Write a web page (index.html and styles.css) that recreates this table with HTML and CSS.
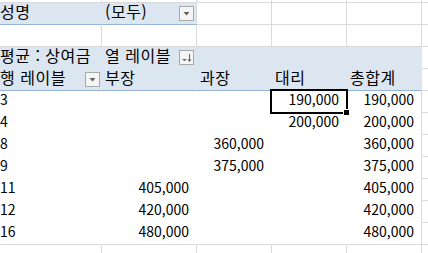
FILE: index.html
```html
<!DOCTYPE html>
<html lang="ko">
<head>
<meta charset="utf-8">
<title>피벗 테이블</title>
<link rel="stylesheet" href="styles.css">
</head>
<body>
<div class="sheet">
  <div class="c top first"></div><div class="c top"></div><div class="c top"></div><div class="c top"></div><div class="c top"></div><div class="c top"></div>

  <div class="c f1 first fA k">성명</div>
  <div class="c f1 btncell k">(모두)<span class="btn"><svg width="13" height="13" viewBox="0 0 13 13"><polygon points="3.5,5 9.5,5 6.5,8.5" fill="#5f5f5f"/></svg></span></div>
  <div class="c"></div><div class="c"></div><div class="c"></div><div class="c"></div>

  <div class="c first"></div><div class="c"></div><div class="c"></div><div class="c"></div><div class="c"></div><div class="c"></div>

  <div class="c h3 first k">평균 : 상여금</div>
  <div class="c h3 btncell k">열 레이블<span class="btn"><svg width="13" height="13" viewBox="0 0 13 13"><polygon points="2,8 7,8 4.5,10" fill="#5f5f5f"/><rect x="9" y="3" width="1" height="6" fill="#5f5f5f"/><polygon points="7.5,8.5 11.5,8.5 9.5,11" fill="#5f5f5f"/></svg></span></div>
  <div class="c h3"></div><div class="c h3"></div><div class="c h3"></div><div class="c"></div>

  <div class="c h4 first btncellA k">행 레이블<span class="btn"><svg width="13" height="13" viewBox="0 0 13 13"><polygon points="3.5,5 9.5,5 6.5,8.5" fill="#5f5f5f"/></svg></span></div>
  <div class="c h4 k">부장</div>
  <div class="c h4 k">과장</div>
  <div class="c h4 k">대리</div>
  <div class="c h4 k">총합계</div>
  <div class="c"></div>

  <div class="c pv first">3</div><div class="c pv num"></div><div class="c pv num"></div><div class="c pv num">190,000</div><div class="c pv num lastcol">190,000</div><div class="c"></div>
  <div class="c pv first">4</div><div class="c pv num"></div><div class="c pv num"></div><div class="c pv num">200,000</div><div class="c pv num lastcol">200,000</div><div class="c"></div>
  <div class="c pv first">8</div><div class="c pv num"></div><div class="c pv num">360,000</div><div class="c pv num"></div><div class="c pv num lastcol">360,000</div><div class="c"></div>
  <div class="c pv first">9</div><div class="c pv num"></div><div class="c pv num">375,000</div><div class="c pv num"></div><div class="c pv num lastcol">375,000</div><div class="c"></div>
  <div class="c pv first">11</div><div class="c pv num">405,000</div><div class="c pv num"></div><div class="c pv num"></div><div class="c pv num lastcol">405,000</div><div class="c"></div>
  <div class="c pv first">12</div><div class="c pv num">420,000</div><div class="c pv num"></div><div class="c pv num"></div><div class="c pv num lastcol">420,000</div><div class="c"></div>
  <div class="c pv first lastrow">16</div><div class="c pv num lastrow">480,000</div><div class="c pv num lastrow"></div><div class="c pv num lastrow"></div><div class="c pv num lastcol lastrow">480,000</div><div class="c"></div>

  <div class="c first end"></div><div class="c end"></div><div class="c end"></div><div class="c end"></div><div class="c end"></div><div class="c end"></div>

  <div class="sel"></div>
  <div class="handle"></div>
</div>
</body>
</html>
```

FILE: styles.css
```css
* { box-sizing: border-box; }
html, body { margin: 0; padding: 0; background: #fff; }
body {
  width: 428px;
  height: 253px;
  overflow: hidden;
  font-family: "Noto Sans CJK KR", "Noto Sans", sans-serif;
  font-size: 14px;
  color: #000;
}
.sheet {
  position: relative;
  display: grid;
  grid-template-columns: 102px 95px 75px 75px 75px 1fr;
  grid-template-rows: 3px repeat(11, 22px) 8px;
}
.c {
  border-right: 1px solid #dadada;
  border-bottom: 1px solid #dadada;
  display: flex;
  align-items: flex-start;
  line-height: 17px;
  padding: 0 3px;
  white-space: nowrap;
  min-width: 0;
}
.c.end { border-bottom: 0; }
.c.first { padding-left: 0; }
.k { font-size: 16px; letter-spacing: 0.5px; }
.f1 { background: #dce6f1; border-bottom-color: #95b3d7; }
.f1.fA { border-right-color: #dce6f1; }
.h3 { background: #dce6f1; border-right-color: #dce6f1; border-bottom-color: #dce6f1; }
.h4 { background: #dce6f1; border-right-color: #dce6f1; border-bottom-color: #95b3d7; }
.pv { border-right-color: #fff; border-bottom-color: #fff; }
.pv.lastcol { border-right-color: #dadada; }
.pv.lastrow { border-bottom-color: #dadada; }
.num { justify-content: flex-end; padding-right: 7px; }
.btncell { padding-right: 2px; }
.btncellA { padding-right: 1px; }
.btn {
  margin-left: auto;
  margin-top: 3px;
  width: 15px;
  height: 15px;
  flex: none;
  border: 1px solid #a8a8a8;
  background: #f5f5f5;
  display: block;
}
.btn svg { display: block; }
.sel {
  position: absolute;
  left: 270px;
  top: 89px;
  width: 78px;
  height: 25px;
  border: 2px solid #000;
}
.handle {
  position: absolute;
  left: 343px;
  top: 109px;
  width: 7px;
  height: 7px;
  background: #000;
  border: 1px solid #fff;
}
```
